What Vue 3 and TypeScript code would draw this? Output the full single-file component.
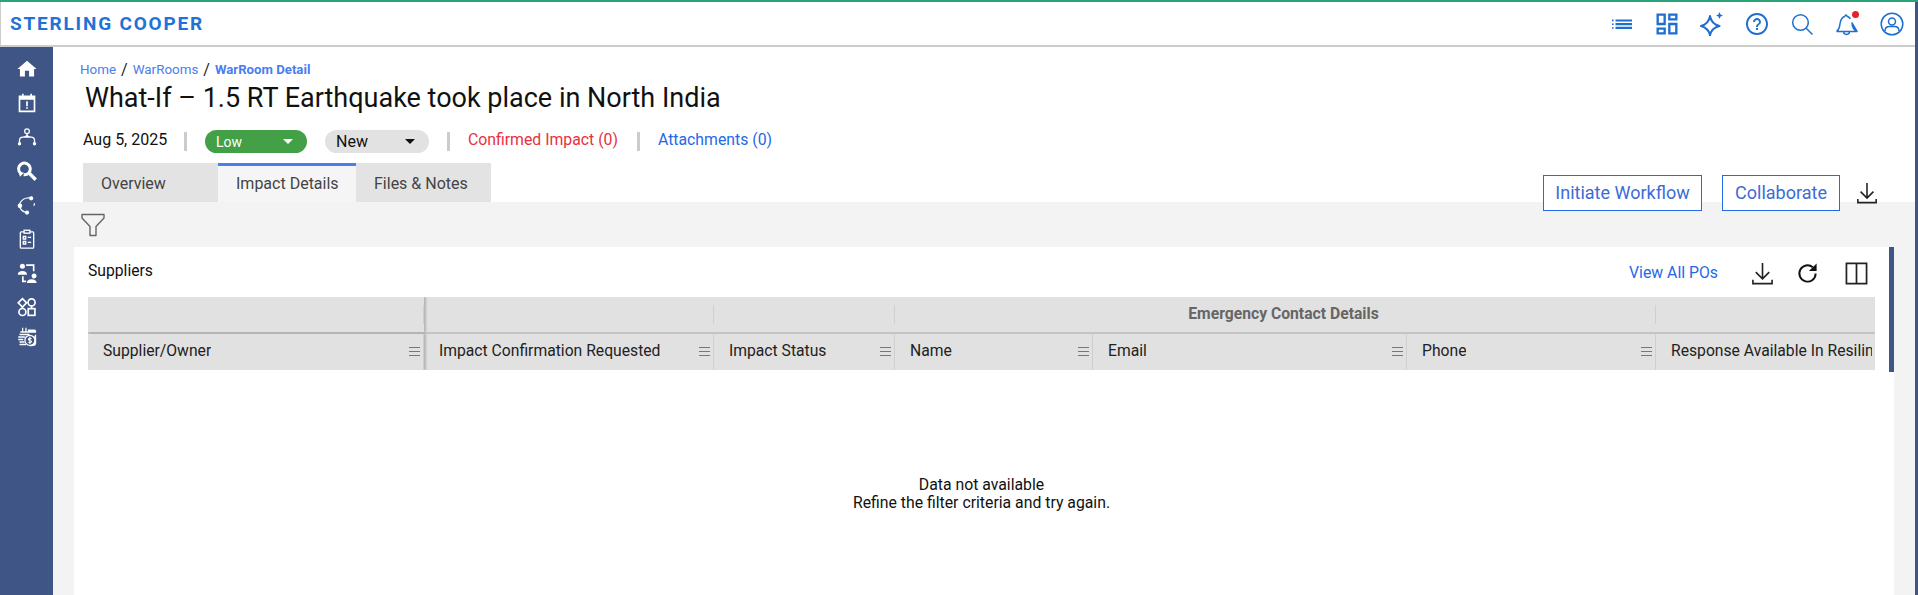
<template>
  <div class="app">
    <header class="topbar">
      <div class="logo">STERLING COOPER</div>
      <div class="top-icons">
        <svg viewBox="0 0 24 24" class="ti"><path fill="currentColor" d="M2 9.200h1.600V7.600H2zM2 13h1.600v-1.600H2zM2 16.800h1.600v-1.600H2zM5.500 9.500h16.500V7.400H5.500zM5.500 13.200h16.500v-2.200H5.500zM5.500 17h16.500v-2.200H5.500z"/></svg>
        <svg viewBox="0 0 24 24" class="ti big"><path fill="currentColor" d="M19 5v2h-4V5h4M9 5v6H5V5h4m10 8v6h-4v-6h4M9 17v2H5v-2h4M21 3h-8v6h8V3zM11 3H3v10h8V3zm10 8h-8v10h8V11zm-10 4H3v6h8v-6z"/></svg>
        <svg viewBox="0 0 24 24" class="ti"><path fill="none" stroke="currentColor" stroke-width="2" stroke-linejoin="round" d="M10 4c.8 5 3.500 8.500 9.500 10-6 1.500-8.700 5-9.500 9.500-.8-4.500-3.500-8-9-9.500 5.500-1.500 8.200-5 9-10z"/><path fill="currentColor" d="M19.500 0l1.100 2.400 2.400 1.100-2.400 1.100-1.100 2.400-1.100-2.400-2.400-1.100 2.400-1.100z"/></svg>
        <svg viewBox="0 0 24 24" class="ti"><path fill="currentColor" d="M11 18h2v-2h-2v2zm1-17C5.900 1 1 5.900 1 12s4.900 11 11 11 11-4.900 11-11S18.100 1 12 1zm0 20c-5 0-9-4-9-9s4-9 9-9 9 4 9 9-4 9-9 9zm0-15c-2.210 0-4 1.790-4 4h2c0-1.100.9-2 2-2s2 .9 2 2c0 2-3 1.750-3 5h2c0-2.250 3-2.500 3-5 0-2.210-1.790-4-4-4z"/></svg>
        <svg viewBox="0 0 24 24" class="ti"><circle cx="10.500" cy="10.500" r="7.800" fill="none" stroke="currentColor" stroke-width="1.500"/><path d="M16.200 16.200l6.300 6.300" stroke="currentColor" stroke-width="1.500"/></svg>
        <span class="bell">
          <svg viewBox="0 0 24 24" class="ti"><path fill="none" stroke="currentColor" stroke-width="1.500" stroke-linejoin="round" d="M1.500 19.500c2-1.500 3-3 3.300-6.500.3-4 1.500-7.500 5.200-8.800.3-1.500 1.700-1.500 2 0 1.500.5 2.500 1.200 3.500 2.500M17 11c.2 4 1 6.700 5 8.500zM1.500 19.500H22M8.500 19.800c.3 3.500 5.700 3.500 6 0"/></svg>
          <i class="dot"></i>
        </span>
        <svg viewBox="0 0 24 24" class="ti"><circle cx="12" cy="12" r="10.800" fill="none" stroke="currentColor" stroke-width="1.500"/><circle cx="12" cy="9.500" r="3.500" fill="none" stroke="currentColor" stroke-width="1.500"/><path fill="none" stroke="currentColor" stroke-width="1.500" d="M5 19c0-3.500 2.500-4.500 4.500-4.500h5c2 0 4.500 1 4.500 4.500"/></svg>
      </div>
    </header>

    <div class="body">
      <nav class="sidebar">
        <svg viewBox="0 0 24 24"><path fill="#fff" d="M9.500 21v-7h5v7h6v-9h3L12 2 .5 12h3v9z"/></svg>
        <svg viewBox="0 0 24 24"><path fill="#fff" d="M6 1h2v2h8V1h2v2h4v20H2V3h4zM4 8v13h16V8zM11 10h2v6h-2zM11 17h2v2h-2z"/></svg>
        <svg viewBox="0 0 24 24" fill="none" stroke="#fff" stroke-width="1.500"><circle cx="12" cy="5" r="2.800"/><path d="M12 8v2M3 19v-3c0-3 2-4 4-4h10c2 0 4 1 4 4v3M12 10c-1 2-3 2-5 2M12 10c1 2 3 2 5 2"/><circle cx="3" cy="20" r="1.300" fill="#fff"/><circle cx="21" cy="20" r="1.300" fill="#fff"/></svg>
        <svg viewBox="0 0 24 24" fill="none" stroke="#fff"><path d="M4.500 15A7 7 0 1 1 8 16.500" stroke-width="3.500"/><path fill="#fff" stroke="none" d="M2 12.500l6.500 1.500-5 5z"/><path d="M15 15l7.500 7.500" stroke-width="4"/></svg>
        <svg viewBox="0 0 24 24" fill="none" stroke="#fff" stroke-width="1.500"><path d="M15 3.500C10 3 5 6 3 11M3.500 14c.5 3 3 5.500 6 6.500M21 10c0 1-.3 2-.8 3"/><circle cx="17" cy="4" r="1.800" fill="#fff"/><circle cx="3.500" cy="13" r="2" fill="#fff"/><circle cx="12" cy="21" r="1.800" fill="#fff"/></svg>
        <svg viewBox="0 0 24 24" fill="none" stroke="#fff" stroke-width="1.600"><rect x="4" y="3.500" width="16" height="19.500" rx="1"/><rect x="8.500" y="1.500" width="7" height="3.500" fill="#3f5585"/><path d="M7.500 9h3v3h-3zM7.500 15h3v3h-3zM13 10h4M13 16h4"/></svg>
        <svg viewBox="0 0 24 24"><circle cx="6.500" cy="4" r="3" fill="#fff"/><path fill="#fff" d="M1 14c0-3 2-4.500 5.500-4.500S12 11 12 14zM17.500 15.500a3 3 0 1 1 0 .1zM12 24c0-3 2-4.500 5.500-4.500S23.500 21 23.500 24z"/><path fill="none" stroke="#fff" stroke-width="2" d="M11 2.500h9V10M7 16v6h4"/></svg>
        <svg viewBox="0 0 24 24" fill="none" stroke="#fff" stroke-width="2"><path d="M6.500 2l5 5-5 5-5-5z"/><circle cx="17.500" cy="6.500" r="4.200"/><circle cx="6.500" cy="18" r="4.200"/><rect x="13.500" y="14" width="8" height="8"/><path d="M17.500 11v3M6.500 12v2"/></svg>
        <svg viewBox="0 0 24 24"><path fill="#fff" d="M6 1h1.500v4H10V1h1.500v4H13v2H4V5h2zM3 8h12v2H3zM1.500 11h8v2h-8zM1.500 14h6v2h-6zM3 17h6v2H3zM3 20h8v2H3zM13 3h8a2 2 0 0 1 2 2v2h-10zM22 9a1 1 0 0 1 1 1v10c0 2-3 3-6 3h-2z"/><circle cx="15.500" cy="16" r="6" fill="#3f5585" stroke="#fff" stroke-width="1.500"/><path fill="none" stroke="#fff" stroke-width="1.300" d="M17.500 14.200c-1-1-3.800-.8-3.800.7s3.800 1 3.800 2.500-2.800 1.700-3.800.7M15.500 11.500v9"/></svg>
      </nav>

      <main class="main">
        <section class="head">
          <div class="crumbs">
            <a>Home</a><span class="slash">/</span><a>WarRooms</a><span class="slash">/</span><a class="current">WarRoom Detail</a>
          </div>
          <h1 class="title">What-If – 1.5 RT Earthquake took place in North India</h1>
          <div class="meta">
            <span class="date">Aug 5, 2025</span>
            <i class="sep"></i>
            <span class="pill low">Low<i class="caret"></i></span>
            <span class="pill new">New<i class="caret"></i></span>
            <i class="sep s2"></i>
            <a class="confirmed">Confirmed Impact (0)</a>
            <i class="sep"></i>
            <a class="attach">Attachments (0)</a>
          </div>
          <div class="tab-row">
            <div class="tabs">
              <div v-for="t in tabs" :key="t.label" class="tab" :class="{ active: t.active }" :style="{ width: t.width + 'px' }">{{ t.label }}</div>
            </div>
            <div class="actions">
              <button class="outline wf">Initiate Workflow</button>
              <button class="outline co">Collaborate</button>
              <svg viewBox="0 0 24 24" class="dl"><path fill="none" stroke="#222" stroke-width="1.700" d="M12 1v16M5 10.500l7 7 7-7M2 18.500v4h20v-4"/></svg>
            </div>
          </div>
        </section>

        <section class="panel">
          <div class="filter-row">
            <svg viewBox="0 0 24 24" class="filter"><path fill="none" stroke="#666" stroke-width="1.400" stroke-linejoin="round" d="M1 1.500h22v3.500L15 13.500V22.500H9V13.500L1 5z"/></svg>
          </div>
          <div class="card">
            <div class="card-head">
              <span class="card-title">Suppliers</span>
              <div class="card-tools">
                <a class="view-all">View All POs</a>
                <svg viewBox="0 0 24 24" class="tool t1"><path fill="none" stroke="#222" stroke-width="1.700" d="M12 1v16M5 10.500l7 7 7-7M2 18.500v4h20v-4"/></svg>
                <svg viewBox="0 0 24 24" class="tool t2"><path fill="none" stroke="#111" stroke-width="2" d="M20.500 12a8.500 8.500 0 1 1-3-6.500"/><path fill="#111" d="M21.500 1.500v8h-8z"/></svg>
                <svg viewBox="0 0 24 24" class="tool t3"><path fill="none" stroke="#222" stroke-width="1.800" d="M1.500 1.500h21v21h-21zM12 1.500v21"/></svg>
              </div>
            </div>
            <div class="grid">
              <div class="row group">
                <div v-for="c in columns" :key="c.name + 'g'" class="cell" :class="{ frozen: c.frozen, plain: c.inGroup }" :style="{ width: c.width + 'px' }"></div>
                <div class="group-label" :style="{ left: groupLeft + 'px', width: groupWidth + 'px' }">Emergency Contact Details</div>
              </div>
              <div class="row">
                <div v-for="c in columns" :key="c.name" class="cell" :class="{ frozen: c.frozen }" :style="{ width: c.width + 'px' }">
                  <span class="label">{{ c.name }}</span>
                  <i v-if="c.menu" class="menu"></i>
                </div>
              </div>
            </div>
            <div class="empty">
              <div>Data not available</div>
              <div>Refine the filter criteria and try again.</div>
            </div>
            <i class="thumb"></i>
          </div>
        </section>
      </main>
    </div>
  </div>
</template>

<script setup lang="ts">
interface Tab { label: string; width: number; active?: boolean }
interface Column { name: string; width: number; frozen?: boolean; inGroup?: boolean; menu: boolean }

const tabs: Tab[] = [
  { label: 'Overview', width: 135 },
  { label: 'Impact Details', width: 138, active: true },
  { label: 'Files & Notes', width: 135 },
]

const columns: Column[] = [
  { name: 'Supplier/Owner', width: 336, frozen: true, menu: true },
  { name: 'Impact Confirmation Requested', width: 290, menu: true },
  { name: 'Impact Status', width: 181, menu: true },
  { name: 'Name', width: 198, inGroup: true, menu: true },
  { name: 'Email', width: 314, inGroup: true, menu: true },
  { name: 'Phone', width: 249, menu: true },
  { name: 'Response Available In Resilinc', width: 220, menu: false },
]

const groupLeft = 815
const groupWidth = 761
</script>

<style>
html, body { margin: 0; background: #fff; overflow: hidden; }
</style>

<style scoped>
.app { width: 1918px; height: 595px; overflow: hidden; display: flex; flex-direction: column; border-top: 2px solid #2aa37a; box-sizing: border-box; font-family: Roboto, "Liberation Sans", sans-serif; color: #111; background: #3f5585; }
.topbar { height: 45px; width: 1915px; flex: none; box-sizing: border-box; background: #fff; border-left: 1px solid #ccc; border-bottom: 2px solid #ccc; display: flex; justify-content: space-between; align-items: center; }
.logo { margin-left: 9px; font-size: 19px; font-weight: 700; letter-spacing: 1.800px; color: #1f73d6; }
.top-icons { display: flex; align-items: center; gap: 21px; padding-right: 11px; color: #1f6fd0; }
.ti { width: 24px; height: 24px; display: block; }
.ti.big { width: 28px; height: 28px; margin: 0 -2px; }
.bell { position: relative; display: block; width: 24px; height: 24px; }
.dot { position: absolute; top: -1px; right: 0; width: 7px; height: 7px; border-radius: 50%; background: #e8202a; }

.body { flex: 1; display: flex; width: 1915px; min-height: 0; }
.sidebar { width: 53px; flex: none; background: #3f5585; display: flex; flex-direction: column; align-items: center; padding-top: 12px; gap: 14px; }
.sidebar svg { width: 20px; height: 20px; display: block; }
.sidebar svg:last-child { margin-top: -4px; }

.main { flex: 1; background: #fff; display: flex; flex-direction: column; min-width: 0; }
.head { height: 155px; flex: none; box-sizing: border-box; padding: 15px 0 0 27px; display: flex; flex-direction: column; }
.crumbs { font-size: 13.400px; line-height: 16px; color: #4a7df0; display: flex; align-items: center; }
.crumbs .slash { color: #222; margin: 0 5px; font-size: 16px; }
.crumbs .current { font-weight: 700; font-size: 13.200px; }
.title { margin: 4px 0 0 5px; font-size: 27px; line-height: 32px; font-weight: 400; color: #111; }
.meta { display: flex; align-items: center; height: 23px; margin-top: 16px; margin-left: 1px; font-size: 15.800px; }
.date { margin-left: 2px; width: 101px; font-size: 16px; margin-bottom: 4px; }
.sep { width: 3px; height: 19px; background: #ccc; }
.pill { position: relative; display: block; height: 23px; line-height: 24px; border-radius: 12px; box-sizing: border-box; padding-left: 11px; }
.pill.low { width: 102px; margin-left: 18px; background: #43a047; color: #fff; font-size: 14px; }
.pill.new { width: 104px; margin-left: 18px; background: #e2e2e2; color: #111; font-size: 16px; }
.caret { position: absolute; top: 9px; right: 14px; border-left: 5px solid transparent; border-right: 5px solid transparent; border-top: 5px solid #111; }
.low .caret { border-top-color: #fff; }
.s2 { margin-left: 18px; }
.confirmed { margin-left: 18px; color: #e8313f; width: 169px; margin-bottom: 4px; }
.attach { margin-left: 18px; color: #2469e8; margin-bottom: 4px; }
.tab-row { margin-top: 10px; margin-left: 1px; height: 39px; display: flex; justify-content: space-between; align-items: flex-end; position: relative; }
.tabs { display: flex; margin-left: 2px; }
.tab { height: 39px; box-sizing: border-box; background: #e3e3e3; color: #444; font-size: 16px; padding: 11px 0 0 18px; }
.tab.active { background: #f5f5f5; border-top: 3px solid #4a7fe8; padding-top: 8px; }
.actions { display: flex; align-items: center; position: absolute; right: 0; top: 12px; }
.outline { height: 36px; box-sizing: border-box; background: #fff; border: 1px solid #2469e8; color: #3d6bd6; font-family: inherit; font-size: 18px; padding: 0 0 2px; }
.wf { width: 159px; margin-right: 20px; }
.co { width: 118px; margin-right: 16px; }
.dl { width: 22px; height: 22px; margin-right: 37px; }

.panel { flex: 1; min-height: 0; background: #f3f3f3; display: flex; flex-direction: column; }
.filter-row { height: 45px; flex: none; display: flex; align-items: center; padding-left: 28px; }
.filter { width: 24px; height: 24px; }
.card { position: relative; flex: 1; margin: 0 21px; background: #fff; padding: 0 19px 0 14px; }
.card-head { height: 50px; display: flex; justify-content: space-between; }
.card-title { font-size: 15.700px; margin-top: 15px; line-height: 18px; }
.card-tools { display: flex; align-items: flex-start; padding-top: 15px; }
.view-all { font-size: 15.800px; line-height: 22px; color: #2469e8; }
.tool { width: 23px; height: 23px; display: block; }
.t1 { margin-left: 33px; }
.t2 { margin-left: 22px; }
.t3 { margin-left: 26px; margin-right: 7px; }
.grid { position: relative; overflow: hidden; background: #e1e1e1; }
.row { display: flex; height: 36px; position: relative; }
.row.group { height: 37px; border-bottom: 2px solid #c4c4c4; box-sizing: border-box; }
.cell { flex: none; box-sizing: border-box; display: flex; align-items: center; justify-content: space-between; padding: 0 4px 0 15px; position: relative; white-space: nowrap; }
.cell::after { content: ''; position: absolute; right: 0; top: 0; bottom: 0; width: 1px; background: #cfcfcf; }
.row.group .cell::after { top: 8px; bottom: 8px; }
.cell.frozen { box-shadow: 2px 0 2px rgba(0,0,0,.2); z-index: 1; }
.cell.plain::after { display: none; }
.cell:last-child::after { display: none; }
.label { font-size: 15.700px; line-height: 20px; color: #222; overflow: hidden; margin-bottom: 3px; }
.menu { display: block; width: 11px; height: 7px; margin-bottom: 1px; border-top: 1px solid #777; border-bottom: 1px solid #777; position: relative; }
.menu::before { content: ''; position: absolute; left: 0; right: 0; top: 3px; height: 1px; background: #777; }
.group-label { position: absolute; top: 0; height: 34px; line-height: 34px; text-align: center; font-size: 15.700px; font-weight: 700; color: #666; }
.empty { margin-top: 106px; text-align: center; font-size: 15.800px; line-height: 18px; color: #111; }
.thumb { position: absolute; top: 0; right: 0; width: 5px; height: 125px; background: #3f5585; }
</style>
